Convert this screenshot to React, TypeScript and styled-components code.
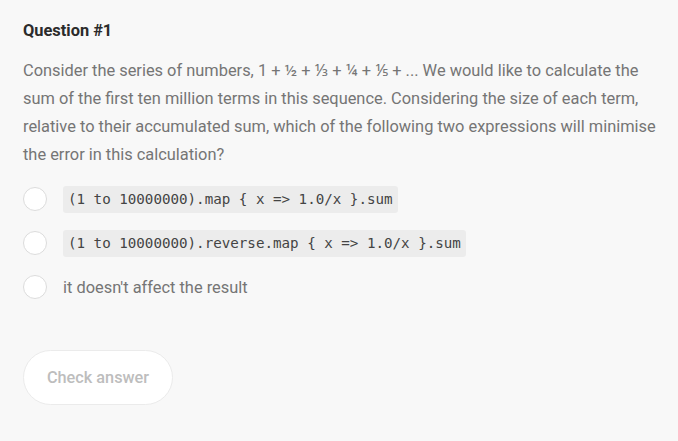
import { createGlobalStyle } from 'styled-components'
import styled from 'styled-components'

const GlobalStyle = createGlobalStyle`
  body {
    margin: 0;
    background: #f8f8f8;
    font-family: Roboto, 'Noto Sans', sans-serif;
  }
`

const Page = styled.div`
  padding: 21px 16px 0 23px;
  display: flex;
  flex-direction: column;
`

const Title = styled.h2`
  margin: 0;
  font-size: 16.4px;
  line-height: 20px;
  font-weight: 700;
  color: #2b2b2b;
`

const Prompt = styled.p`
  margin: 16px 0 0 0;
  font-size: 16.4px;
  line-height: 28px;
  color: #757575;
`

const Options = styled.div`
  margin-top: 16px;
  display: flex;
  flex-direction: column;
  gap: 16px;
`

const Option = styled.label`
  display: flex;
  align-items: center;
  gap: 16px;
  height: 28px;
  cursor: pointer;
`

const Radio = styled.span`
  width: 22px;
  height: 22px;
  border-radius: 50%;
  background: #ffffff;
  border: 1px solid #dcdcdc;
  flex-shrink: 0;
`

const Code = styled.code`
  display: inline-block;
  background: #ececec;
  border-radius: 3px;
  padding: 0 5px;
  height: 27px;
  line-height: 27px;
  font-family: 'DejaVu Sans Mono', 'Liberation Mono', monospace;
  font-size: 14.2px;
  color: #444444;
`

const OptionText = styled.span`
  font-size: 16.4px;
  color: #757575;
`

const CheckButton = styled.button`
  margin-top: 49px;
  align-self: flex-start;
  width: 150px;
  height: 55px;
  border-radius: 28px;
  background: #ffffff;
  border: 1px solid #ebebeb;
  font-family: Roboto, sans-serif;
  font-size: 16.3px;
  font-weight: 500;
  color: #bdbdbd;
  cursor: default;
`

const options: { code: boolean; text: string }[] = [
  { code: true, text: '(1 to 10000000).map { x => 1.0/x }.sum' },
  { code: true, text: '(1 to 10000000).reverse.map { x => 1.0/x }.sum' },
  { code: false, text: "it doesn't affect the result" },
]

export default function App() {
  return (
    <>
      <GlobalStyle />
      <Page>
        <Title>Question #1</Title>
        <Prompt>
          Consider the series of numbers, 1 + ½ + ⅓ + ¼ + ⅕ + ... We would like to calculate the sum of the first ten
          million terms in this sequence. Considering the size of each term, relative to their accumulated sum, which of
          the following two expressions will minimise the error in this calculation?
        </Prompt>
        <Options>
          {options.map((o) => (
            <Option key={o.text}>
              <Radio />
              {o.code ? <Code>{o.text}</Code> : <OptionText>{o.text}</OptionText>}
            </Option>
          ))}
        </Options>
        <CheckButton disabled>Check answer</CheckButton>
      </Page>
    </>
  )
}
